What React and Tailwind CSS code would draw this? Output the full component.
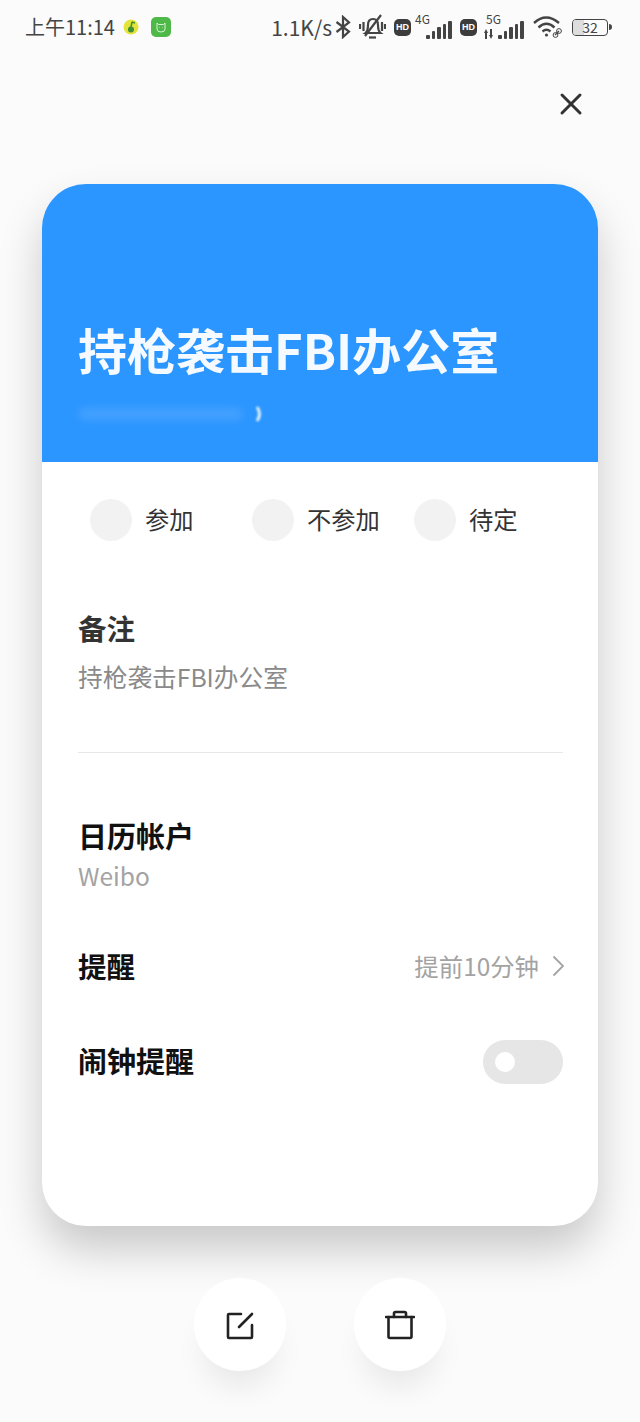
import { X } from "lucide-react";

const cjk = { fontFamily: '"Noto Sans CJK SC", "Noto Sans", sans-serif' };

function Signal() {
  const hs = [4, 8, 12, 15, 18];
  return (
    <div className="flex items-end gap-[2px] h-[18px]">
      {hs.map((h, i) => (
        <div key={i} className="w-[3.6px] rounded-[1px] bg-[#444]" style={{ height: h }} />
      ))}
    </div>
  );
}

function HdBadge() {
  return (
    <div className="w-[17px] h-[17px] rounded-[5px] bg-[#3c3c3c] flex items-center justify-center text-white text-[9px] font-bold leading-none" style={{ fontFamily: '"Liberation Sans", sans-serif' }}>
      HD
    </div>
  );
}

function StatusBar() {
  return (
    <div className="h-[54px] pl-[25px] pr-[28px] flex items-center justify-between text-[#444]" style={cjk}>
      <div className="flex items-center">
        <span className="text-[20px] leading-none">上午11:14</span>
        {/* cherry icon */}
        <svg width="16" height="16" viewBox="0 0 16 16" className="ml-[8px]">
          <circle cx="8" cy="8" r="7.5" fill="#e3e33a" />
          <circle cx="8" cy="10.5" r="3" fill="#3d8f36" />
          <path d="M8 8 L9 3 M9 3 L12 4" stroke="#3d8f36" strokeWidth="1.5" fill="none" />
        </svg>
        {/* cat app icon */}
        <div className="ml-[12px] w-[20px] h-[20px] rounded-[5px] bg-[#4eb848] flex items-center justify-center">
          <svg width="14" height="14" viewBox="0 0 14 14" fill="none" stroke="#d8f5d2" strokeWidth="1">
            <path d="M3 3 L4.5 4.5 H9.5 L11 3 V9 Q11 12 7 12 Q3 12 3 9 Z" />
            <path d="M5 7.5 h.5 M8.5 7.5 h.5" />
          </svg>
        </div>
      </div>
      <div className="flex items-center">
        <span className="text-[21px] leading-none">1.1K/s</span>
        {/* bluetooth */}
        <svg width="16" height="24" viewBox="0 0 16 24" fill="none" stroke="#444" strokeWidth="2.2" className="ml-[3px]">
          <path d="M1.5 7 L14 16.5 L8 22 V2 L14 7.5 L1.5 17" />
        </svg>
        {/* muted bell */}
        <svg width="27" height="26" viewBox="0 0 27 26" fill="none" stroke="#444" strokeWidth="2.2" className="ml-[8px]">
          <path d="M6.5 19 Q9 17 9 11 Q9 5 14 5 Q19 5 19 11 Q19 17 21.5 19 Z" />
          <path d="M10 23.5 H17" />
          <path d="M1 10 V15 M4.5 8 V17 M23 8 V17 M26 10 V15" />
          <path d="M6 22 L22 1" />
        </svg>
        <div className="ml-[8px]"><HdBadge /></div>
        <div className="ml-[4px] relative w-[46px] h-[24px] flex items-end justify-end">
          <span className="absolute left-0 top-[-2px] text-[12px] leading-none">4G</span>
          <div className="mr-[9px]"><Signal /></div>
        </div>
        <div className="ml-[-1px]"><HdBadge /></div>
        <div className="ml-[7px] relative w-[40px] h-[24px] flex items-end justify-end">
          <span className="absolute left-[2px] top-[-2px] text-[12px] leading-none">5G</span>
          {/* arrows next to signal */}
          <svg width="9" height="10" viewBox="0 0 9 10" className="absolute left-0 bottom-0" fill="#444">
            <path d="M0 4 L2 0 L4 4 H3 V10 H1 V4 Z" />
            <path d="M5 6 L7 10 L9 6 H8 V0 H6 V6 Z" />
          </svg>
          <Signal />
        </div>
        {/* wifi */}
        <svg width="30" height="24" viewBox="0 0 30 24" fill="none" stroke="#444" strokeWidth="2.4" className="ml-[9px]">
          <path d="M1 8 Q13 -3 26 8" />
          <path d="M5.5 12.5 Q13.5 5 21.5 12.5" />
          <path d="M9.5 16.5 Q13.5 13 17.5 16.5" />
          <circle cx="13.5" cy="20" r="1.6" fill="#444" stroke="none" />
          <path d="M22 20 L26 16" strokeWidth="1.2" />
          <circle cx="22.5" cy="20" r="2.4" strokeWidth="1" />
          <circle cx="26" cy="16" r="2.4" strokeWidth="1" />
        </svg>
        {/* battery */}
        <div className="ml-[9px] flex items-center">
          <div className="relative w-[36px] h-[17px] rounded-[4px] border-[1.5px] border-[#444] overflow-hidden flex items-center justify-center text-[14px] leading-none">
            <div className="absolute left-0 top-0 bottom-0 w-[11px] bg-[#ddd]" />
            <span className="relative">32</span>
          </div>
          <div className="ml-[1px] w-[3px] h-[6px] bg-[#444] rounded-r-sm" />
        </div>
      </div>
    </div>
  );
}

function Rsvp({ label, className }) {
  return (
    <div className={`flex items-center ${className}`}>
      <div className="w-[42px] h-[42px] rounded-full bg-[#f2f2f2]" />
      <span className="ml-[13px] mt-[-2px] text-[24.3px] leading-none text-[#333]">{label}</span>
    </div>
  );
}

export default function App() {
  return (
    <div className="w-[640px] h-[1422px] overflow-hidden bg-[#fbfbfb]" style={cjk}>
      <StatusBar />

      {/* Close */}
      <div className="h-[130px] pr-[51px] pt-[32px] flex justify-end items-start">
        <X size={36} strokeWidth={2} className="text-[#333]" />
      </div>

      {/* Card */}
      <div className="mx-[42px] h-[1042px] rounded-[44px] overflow-hidden bg-white shadow-[0_24px_44px_rgba(0,0,0,0.2)]">
        <div className="h-[278px] bg-[#2b96ff] pl-[36px] pt-[135px]">
          <h1 className="text-[49px] leading-[60px] font-semibold text-[#f4faff] whitespace-nowrap">持枪袭击FBI办公室</h1>
          {/* blurred date line */}
          <div className="mt-[26px] flex items-center">
            <div className="w-[165px] h-[12px] rounded-full bg-[#4fa6ff] opacity-70 blur-[4px]" />
            <svg width="10" height="18" viewBox="0 0 10 18" className="ml-[11px] blur-[1px]" fill="none" stroke="#e2f2ff" strokeWidth="3">
              <path d="M3 2 Q8 9 3 16" />
            </svg>
          </div>
        </div>

        <div className="pt-[37px] pl-[48px] flex">
          <Rsvp label="参加" className="w-[162px]" />
          <Rsvp label="不参加" className="w-[162px]" />
          <Rsvp label="待定" />
        </div>

        <div className="ml-[36px] mr-[35px]">
          <div className="mt-[67px] text-[28.5px] leading-[40px] font-semibold text-[#333]">备注</div>
          <div className="mt-[8px] text-[24.7px] leading-[40px] text-[#8a8a8a] whitespace-nowrap">持枪袭击FBI办公室</div>
          <div className="mt-[56px] h-[1px] bg-[#e8e8e8]" />

          <div className="mt-[62px] text-[29px] leading-[40px] font-semibold text-[#111]">日历帐户</div>
          <div className="mt-[1px] text-[24.5px] leading-[40px] text-[#a3a3a3]">Weibo</div>

          <div className="mt-[50px] h-[40px] flex items-center justify-between">
            <span className="text-[28.5px] font-semibold text-[#111]">提醒</span>
            <div className="flex items-center text-[#a3a3a3]">
              <span className="text-[24.4px]">提前10分钟</span>
              <svg width="13" height="22" viewBox="0 0 13 22" fill="none" stroke="#a3a3a3" strokeWidth="1.8" className="ml-[13px] mr-[-2px]">
                <path d="M1.5 1.5 L11 11 L1.5 20.5" />
              </svg>
            </div>
          </div>

          <div className="mt-[54px] h-[44px] flex items-center justify-between">
            <span className="mt-[-2px] text-[29px] font-semibold text-[#111]">闹钟提醒</span>
            <div className="w-[80px] h-[44px] rounded-full bg-[#e6e6e6] flex items-center pl-[12px]">
              <div className="w-[20px] h-[20px] rounded-full bg-white" />
            </div>
          </div>
        </div>
      </div>

      {/* Bottom actions */}
      <div className="mt-[52px] flex justify-center gap-[68px]">
        <button className="w-[92px] h-[93px] rounded-full bg-white shadow-[0_26px_30px_-10px_rgba(0,0,0,0.08)] flex items-center justify-center">
          <svg width="28" height="28" viewBox="0 0 28 28" fill="none" stroke="#222" strokeWidth="2.6" strokeLinecap="round" strokeLinejoin="round" className="mt-[2px]">
            <path d="M15 2 H3 Q2 2 2 3 V25 Q2 26 3 26 H25 Q26 26 26 25 V13" />
            <path d="M13 15 L26 2" />
          </svg>
        </button>
        <button className="w-[92px] h-[93px] rounded-full bg-white shadow-[0_26px_30px_-10px_rgba(0,0,0,0.08)] flex items-center justify-center">
          <svg width="30" height="30" viewBox="0 0 30 30" fill="none" stroke="#222" strokeWidth="2.6" strokeLinecap="round" strokeLinejoin="round">
            <path d="M1 7 H29" />
            <path d="M9 7 V3.5 Q9 2 10.5 2 H19.5 Q21 2 21 3.5 V7" />
            <path d="M3.5 7 V26.5 Q3.5 28 5 28 H25 Q26.5 28 26.5 26.5 V7" />
          </svg>
        </button>
      </div>
    </div>
  );
}
